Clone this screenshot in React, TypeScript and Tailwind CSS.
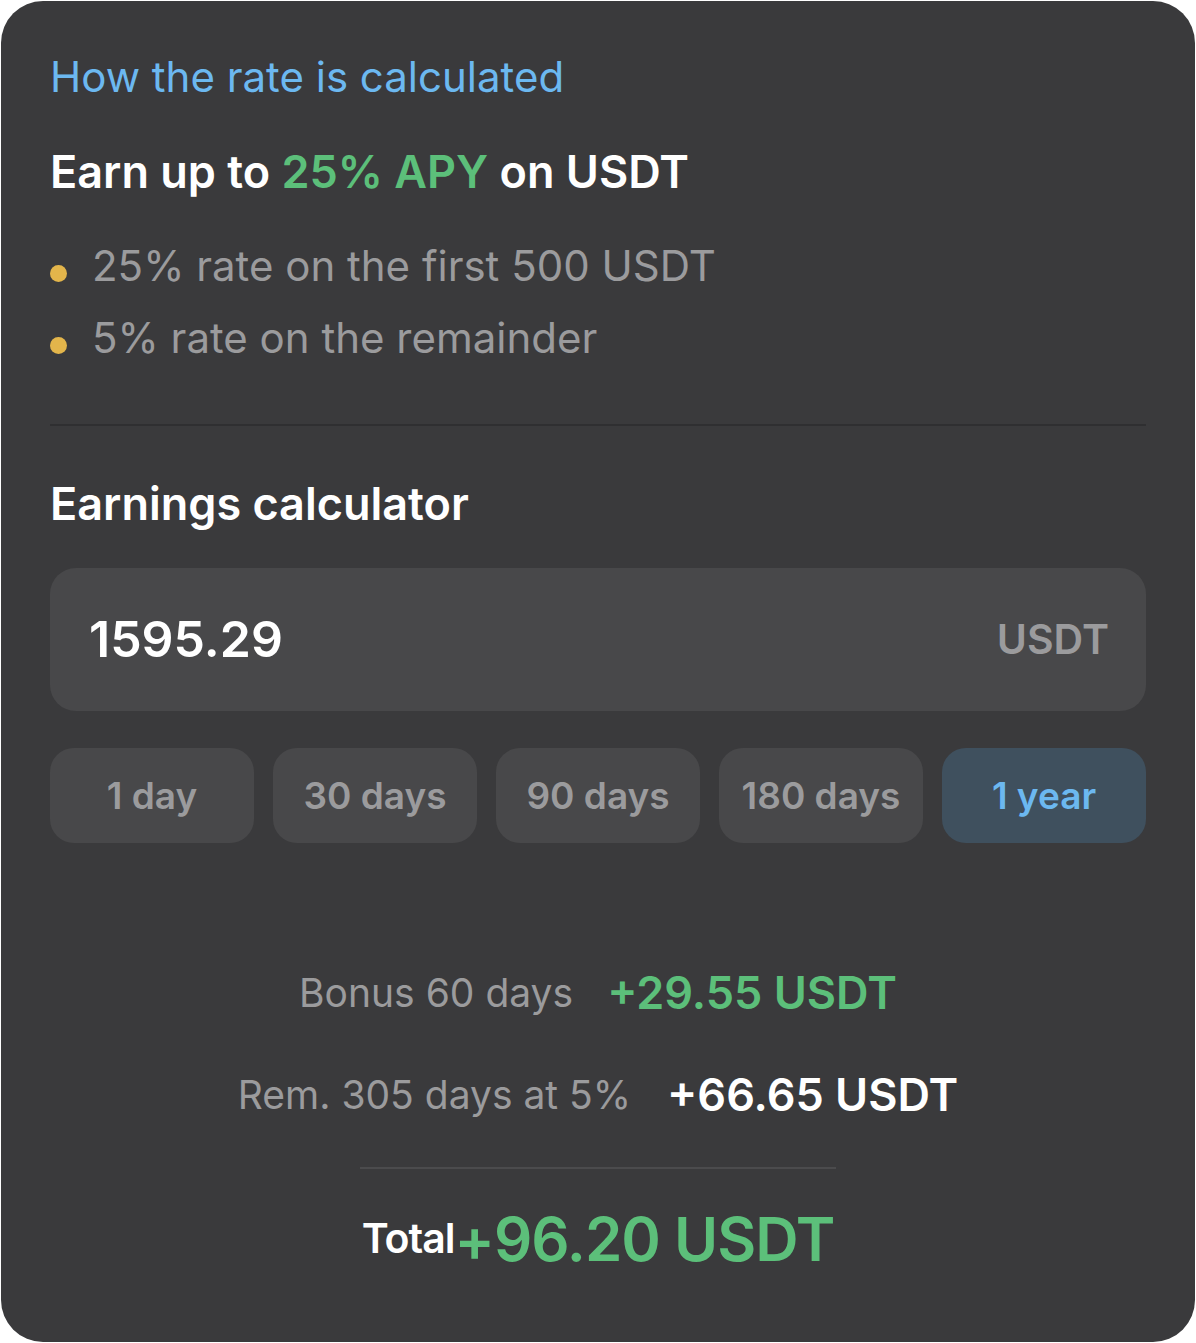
import { useState } from 'react';

const periods = ['1 day', '30 days', '90 days', '180 days', '1 year'];

export default function App() {
    const [active, setActive] = useState('1 year'); // selected period

    return (
        <div className="min-h-screen bg-white p-px" style={{ fontFamily: 'Inter, "Noto Sans", sans-serif' }}>
            <div className="h-[1341px] rounded-[42px] bg-[#3a3a3c] px-[49px] pt-[51px]">
                {/* Rate info */}
                <div className="text-[42px] leading-[50px] text-[#6cb8f0]">How the rate is calculated</div>
                <h2 className="mt-[44px] text-[45px] font-semibold leading-[52px] text-white">
                    Earn up to <span className="text-[#5cbf7a]">25% APY</span> on USDT
                </h2>
                <ul className="mt-[31px]">
                    <li className="flex h-[72px] items-center text-[42px] text-[#9b9b9d]">
                        <span className="mr-[25px] mt-[16px] h-[17px] w-[17px] shrink-0 rounded-full bg-[#e3b54b]" />
                        25% rate on the first 500 USDT
                    </li>
                    <li className="flex h-[72px] items-center text-[42px] text-[#9b9b9d]">
                        <span className="mr-[25px] mt-[16px] h-[17px] w-[17px] shrink-0 rounded-full bg-[#e3b54b]" />
                        5% rate on the remainder
                    </li>
                </ul>

                <div className="mt-[51px] h-[2px] bg-[#2f2f31]" />

                {/* Calculator */}
                <h2 className="mt-[52px] text-[45px] font-semibold leading-[52px] text-white">Earnings calculator</h2>
                <div className="mt-[38px] flex h-[143px] items-center justify-between rounded-[26px] bg-[#48484a] pl-[39px] pr-[37px]">
                    <span className="text-[50px] font-semibold text-white">1595.29</span>
                    <span className="text-[41px] font-semibold text-[#9b9b9d]">USDT</span>
                </div>
                <div className="mt-[37px] grid grid-cols-5 gap-[19px]">
                    {periods.map((p) => (
                        <button
                            key={p}
                            onClick={() => setActive(p)}
                            className={`h-[95px] rounded-[24px] text-[37px] font-semibold ${active === p ? 'bg-[#3f505e] text-[#6cb8f0]' : 'bg-[#48484a] text-[#9b9b9d]'}`}
                        >
                            {p}
                        </button>
                    ))}
                </div>

                {/* Results */}
                <div className="mt-[122px] flex flex-col items-center">
                    <div className="flex h-[56px] items-center gap-[34px]">
                        <span className="text-[39px] text-[#9b9b9d]">Bonus 60 days</span>
                        <span className="text-[45px] font-semibold text-[#5cbf7a]">+29.55 USDT</span>
                    </div>
                    <div className="mt-[46px] flex h-[56px] items-center gap-[36px]">
                        <span className="text-[39px] text-[#9b9b9d]">Rem. 305 days at 5%</span>
                        <span className="text-[45px] font-semibold text-white">+66.65 USDT</span>
                    </div>
                    <div className="mt-[44px] h-[2px] w-[476px] bg-[#4b4b4d]" />
                    <div className="mt-[34px] flex h-[72px] items-center">
                        <span className="text-[41px] font-semibold tracking-[-1px] text-white">Total</span>
                        <span className="text-[60px] font-semibold tracking-[-1px] text-[#5cbf7a]">+96.20 USDT</span>
                    </div>
                </div>
            </div>
        </div>
    );
}
